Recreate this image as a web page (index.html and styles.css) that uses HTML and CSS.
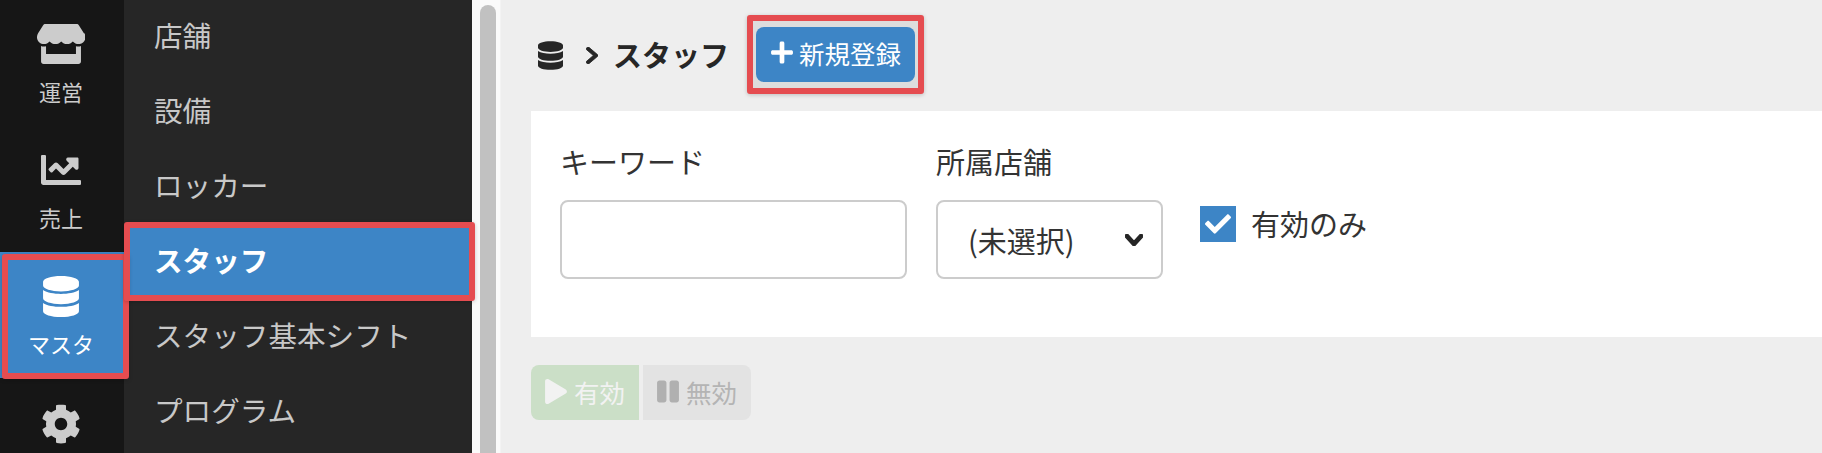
FILE: index.html
```html
<!DOCTYPE html>
<html lang="ja">
<head>
  <meta charset="UTF-8" />
  <title>スタッフ</title>
  <link rel="stylesheet" href="styles.css">
</head>
<body>
  <div class="layout">
    <!-- メインメニュー -->
    <nav class="rail">
      <div class="rail-item">
        <span class="rail-icon"><svg width="48" height="40" viewBox="0 0 616 512"><path d="M602 118.6L537.1 15C531.3 5.7 521 0 510 0H106C95 0 84.7 5.7 78.9 15L14 118.6c-33.9 54.1-3.9 129.3 59.4 137.9 4.6.6 9.1.9 13.6.9 29.8 0 56.3-13.1 74.6-33.4 18.3 20.3 44.8 33.4 74.6 33.4 29.9 0 56.4-13.1 74.6-33.4 18.3 20.3 44.8 33.4 74.6 33.4 29.9 0 56.4-13.1 74.6-33.4 18.3 20.3 44.8 33.4 74.6 33.4 4.6 0 9-.3 13.6-.9 63.5-8.6 93.6-83.8 59.7-137.9zM529.5 288c-10 0-19.9-1.5-29.5-3.8V384H116v-99.8c-9.6 2.2-19.5 3.8-29.5 3.8-6 0-12.1-.4-18-1.2-5.6-.8-11.1-2.1-16.4-3.6V480c0 17.7 14.3 32 32 32h448c17.7 0 32-14.3 32-32V283.2c-5.4 1.6-10.8 2.9-16.4 3.6-6.1.8-12.1 1.2-18.1 1.2z"/></svg></span>
        <span class="rail-label">運営</span>
      </div>
      <div class="rail-item">
        <span class="rail-icon"><svg width="40" height="40" viewBox="0 0 512 512"><path d="M496 384H64V80c0-8.84-7.16-16-16-16H16C7.16 64 0 71.16 0 80v336c0 17.67 14.33 32 32 32h464c8.84 0 16-7.16 16-16v-32c0-8.84-7.16-16-16-16zM464 96H345.94c-21.38 0-32.09 25.85-16.97 40.97l32.4 32.4L288 242.75l-73.37-73.37c-12.5-12.5-32.76-12.5-45.25 0l-68.69 68.69c-6.25 6.25-6.25 16.38 0 22.63l22.62 22.62c6.25 6.25 16.38 6.25 22.63 0L192 237.25l73.37 73.37c12.5 12.5 32.76 12.5 45.25 0l96-96 32.4 32.4c15.12 15.12 40.97 4.41 40.97-16.97V112c.01-8.84-7.15-16-15.99-16z"/></svg></span>
        <span class="rail-label">売上</span>
      </div>
      <div class="rail-item active">
        <span class="rail-icon"><svg width="36" height="41" viewBox="0 0 448 512"><path d="M448 73.143v45.714C448 159.143 347.667 192 224 192S0 159.143 0 118.857V73.143C0 32.857 100.333 0 224 0s224 32.857 224 73.143zM448 176v102.857C448 319.143 347.667 352 224 352S0 319.143 0 278.857V176c48.125 33.143 136.208 48.572 224 48.572S399.874 209.143 448 176zm0 160v102.857C448 479.143 347.667 512 224 512S0 479.143 0 438.857V336c48.125 33.143 136.208 48.572 224 48.572S399.874 369.143 448 336z"/></svg></span>
        <span class="rail-label">マスタ</span>
        <span class="mark rail-mark"></span>
      </div>
      <div class="rail-item rail-gear">
        <span class="rail-icon"><svg width="40" height="40" viewBox="0 0 512 512"><path d="M487.4 315.7l-42.6-24.6c4.3-23.2 4.3-47 0-70.2l42.6-24.6c4.9-2.8 7.1-8.6 5.5-14-11.1-35.6-30-67.8-54.7-94.6-3.8-4.1-10-5.1-14.8-2.3L380.8 110c-17.9-15.4-38.5-27.3-60.8-35.1V25.8c0-5.6-3.9-10.5-9.4-11.7-36.7-8.2-74.3-7.8-109.2 0-5.5 1.2-9.4 6.1-9.4 11.7V75c-22.2 7.9-42.8 19.8-60.8 35.1L88.7 85.5c-4.9-2.8-11-1.9-14.8 2.3-24.7 26.7-43.6 58.9-54.7 94.6-1.7 5.4.6 11.2 5.5 14L67.3 221c-4.3 23.2-4.3 47 0 70.2l-42.6 24.6c-4.9 2.8-7.1 8.6-5.5 14 11.1 35.6 30 67.8 54.7 94.6 3.8 4.1 10 5.1 14.8 2.3l42.6-24.6c17.9 15.4 38.5 27.3 60.8 35.1v49.2c0 5.6 3.9 10.5 9.4 11.7 36.7 8.2 74.3 7.8 109.2 0 5.5-1.2 9.4-6.1 9.4-11.7v-49.2c22.2-7.9 42.8-19.8 60.8-35.1l42.6 24.6c4.9 2.8 11 1.9 14.8-2.3 24.7-26.7 43.6-58.9 54.7-94.6 1.5-5.5-.7-11.3-5.6-14.1zM256 336c-44.1 0-80-35.9-80-80s35.9-80 80-80 80 35.9 80 80-35.9 80-80 80z"/></svg></span>
      </div>
    </nav>

    <!-- サブメニュー -->
    <nav class="submenu">
      <div class="sub-item">店舗</div>
      <div class="sub-item">設備</div>
      <div class="sub-item">ロッカー</div>
      <div class="sub-item active">スタッフ<span class="mark sub-mark"></span></div>
      <div class="sub-item">スタッフ基本シフト</div>
      <div class="sub-item">プログラム</div>
    </nav>

    <div class="scrollbar"><div class="scroll-thumb"></div></div>

    <main class="main">
      <div class="page-head">
        <svg class="head-db" width="25" height="29" viewBox="0 0 448 512"><path d="M448 73.143v45.714C448 159.143 347.667 192 224 192S0 159.143 0 118.857V73.143C0 32.857 100.333 0 224 0s224 32.857 224 73.143zM448 176v102.857C448 319.143 347.667 352 224 352S0 319.143 0 278.857V176c48.125 33.143 136.208 48.572 224 48.572S399.874 209.143 448 176zm0 160v102.857C448 479.143 347.667 512 224 512S0 479.143 0 438.857V336c48.125 33.143 136.208 48.572 224 48.572S399.874 369.143 448 336z"/></svg>
        <svg class="head-chevron" width="12" height="17" viewBox="27 37 265 438" preserveAspectRatio="none"><path d="M285.476 272.971L91.132 467.314c-9.373 9.373-24.569 9.373-33.941 0l-22.667-22.667c-9.357-9.357-9.375-24.522-.04-33.901L188.505 256 34.484 101.255c-9.335-9.379-9.317-24.544.04-33.901l22.667-22.667c9.373-9.373 24.569-9.373 33.941 0L285.475 239.03c9.373 9.372 9.373 24.568.001 33.941z"/></svg>
        <span class="head-title">スタッフ</span>
        <div class="new-wrap">
          <div class="btn-new">
            <svg width="22" height="25" viewBox="0 0 448 512"><path d="M416 208H272V64c0-17.67-14.33-32-32-32h-32c-17.67 0-32 14.33-32 32v144H32c-17.67 0-32 14.33-32 32v32c0 17.67 14.33 32 32 32h144v144c0 17.67 14.33 32 32 32h32c17.67 0 32-14.33 32-32V304h144c17.67 0 32-14.33 32-32v-32c0-17.67-14.33-32-32-32z"/></svg>
            <span>新規登録</span>
          </div>
        </div>
      </div>

      <div class="card">
        <div class="field">
          <label class="field-label">キーワード</label>
          <input class="text-input" type="text" />
        </div>
        <div class="field">
          <label class="field-label">所属店舗</label>
          <div class="select-box">
            <span>(未選択)</span>
            <svg width="18" height="12" viewBox="5 124 438 264" preserveAspectRatio="none"><path d="M207.029 381.476L12.686 187.132c-9.373-9.373-9.373-24.569 0-33.941l22.667-22.667c9.357-9.357 24.522-9.375 33.901-.04L224 284.505l154.745-154.021c9.379-9.335 24.544-9.317 33.901.04l22.667 22.667c9.373 9.373 9.373 24.569 0 33.941L240.971 381.476c-9.373 9.372-24.569 9.372-33.942 0z"/></svg>
          </div>
        </div>
        <div class="check-row">
          <span class="check-box"><svg width="26" height="26" viewBox="0 0 512 512"><path d="M173.898 439.404l-166.4-166.4c-9.997-9.997-9.997-26.206 0-36.204l36.203-36.204c9.997-9.998 26.206-9.998 36.204 0L192 312.69 432.095 72.596c9.997-9.997 26.206-9.997 36.204 0l36.203 36.204c9.997 9.997 9.997 26.206 0 36.204l-294.4 294.401c-9.998 9.997-26.207 9.997-36.204-.001z"/></svg></span>
          <span class="check-text">有効のみ</span>
        </div>
      </div>

      <div class="actions">
        <div class="btn-act btn-on">
          <svg width="22" height="25" viewBox="0 0 448 512"><path d="M424.4 214.7L72.4 6.6C43.8-10.3 0 6.1 0 47.9V464c0 37.5 40.7 60.1 72.4 41.3l352-208c31.4-18.5 31.5-64.1 0-82.6z"/></svg>
          <span>有効</span>
        </div>
        <div class="btn-act btn-off">
          <svg width="22" height="25" viewBox="0 0 448 512"><path d="M144 479H48c-26.5 0-48-21.5-48-48V79c0-26.5 21.5-48 48-48h96c26.5 0 48 21.5 48 48v352c0 26.5-21.5 48-48 48zm304-48V79c0-26.5-21.5-48-48-48h-96c-26.5 0-48 21.5-48 48v352c0 26.5 21.5 48 48 48h96c26.5 0 48-21.5 48-48z"/></svg>
          <span>無効</span>
        </div>
      </div>
    </main>
  </div>
</body>
</html>
```

FILE: styles.css
```css
* { box-sizing: border-box; }
html, body {
  margin: 0;
  padding: 0;
  height: 100%;
  overflow: hidden;
}
body {
  font-family: "Noto Sans CJK JP", "Noto Sans", sans-serif;
  color: #333;
  background: #eee;
}
.layout {
  display: flex;
  height: 453px;
  overflow: hidden;
}

/* 赤枠 (注釈) */
.mark {
  position: absolute;
  border: 6px solid #e54c50;
  border-radius: 3px;
  box-shadow: 0 1px 4px rgba(0, 0, 0, 0.2);
  z-index: 5;
}

.rail {
  width: 124px;
  flex-shrink: 0;
  background: #161616;
}
.rail-item {
  position: relative;
  height: 126px;
  padding: 23px 2px 0 0;
  display: flex;
  flex-direction: column;
  align-items: center;
  color: #ccc;
}
.rail-item.active {
  background: #3d85c6;
  color: #fff;
}
.rail-gear {
  height: 75px;
  padding-top: 25px;
}
.rail-icon {
  display: flex;
  align-items: center;
  justify-content: center;
  height: 42px;
}
.rail-icon svg { fill: currentColor; }
.rail-label {
  margin-top: 11px;
  font-size: 22px;
  line-height: 30px;
}
.rail-mark {
  top: 2px;
  left: 2px;
  right: -5px;
  bottom: -1px;
}

.submenu {
  width: 348px;
  flex-shrink: 0;
  background: #262626;
}
.sub-item {
  position: relative;
  height: 75px;
  padding: 0 0 7px 30px;
  display: flex;
  align-items: center;
  font-size: 28.6px;
  color: #c8c8c8;
}
.sub-item.active {
  background: #3d85c6;
  color: #fff;
  font-weight: bold;
}
.sub-mark {
  top: -3px;
  left: 0;
  right: -3px;
  bottom: -1px;
}

.scrollbar {
  width: 28px;
  flex-shrink: 0;
  padding: 5px 4px 0 8px;
  background: #fafafa;
}
.scroll-thumb {
  height: 100%;
  border-radius: 8px 8px 0 0;
  background: #c1c1c1;
}

.main {
  flex: 1;
  min-width: 0;
  border-left: 1px solid #f3f3f3;
  background: #eee;
}
.page-head {
  display: flex;
  align-items: center;
  height: 111px;
  padding-left: 37px;
}
.head-db { fill: #262626; }
.head-chevron {
  fill: #262626;
  stroke: #262626;
  stroke-width: 20;
  margin-left: 23px;
}
.head-title {
  margin-left: 15px;
  padding-bottom: 4px;
  font-size: 29px;
  font-weight: bold;
  color: #262626;
}
.new-wrap {
  position: relative;
  margin-left: 18px;
  margin-top: -3px;
  padding: 6px 3px;
  border: 6px solid #e54c50;
  border-radius: 3px;
  background: #ddd;
  box-shadow: 0 1px 4px rgba(0, 0, 0, 0.2);
}
.btn-new {
  display: flex;
  align-items: center;
  gap: 6px;
  height: 55px;
  width: 159px;
  padding: 0 0 3px 15px;
  border-radius: 8px;
  background: #3d85c6;
  color: #fff;
  font-size: 25.5px;
}
.btn-new svg { fill: #fff; }

.card {
  display: flex;
  gap: 29px;
  height: 226px;
  margin-left: 30px;
  padding: 29px 29px 0;
  background: #fff;
}
.field {
  display: flex;
  flex-direction: column;
}
.field-label {
  font-size: 29px;
  line-height: 42px;
  margin-bottom: 18px;
}
.text-input {
  width: 347px;
  height: 79px;
  border: 2px solid #ccc;
  border-radius: 8px;
  background: #fff;
}
.select-box {
  display: flex;
  align-items: center;
  justify-content: space-between;
  width: 227px;
  height: 79px;
  padding: 0 18px 0 30px;
  border: 2px solid #ccc;
  border-radius: 8px;
  font-size: 29px;
}
.select-box svg {
  fill: #262626;
  stroke: #262626;
  stroke-width: 30;
}
.check-row {
  display: flex;
  align-items: center;
  gap: 15px;
  height: 36px;
  margin-top: 66px;
  margin-left: 8px;
  font-size: 29px;
}
.check-text { padding-bottom: 2px; }
.check-box {
  display: flex;
  align-items: center;
  justify-content: center;
  width: 36px;
  height: 36px;
  background: #3d85c6;
}
.check-box svg { fill: #fff; }

.actions {
  display: flex;
  gap: 4px;
  margin: 28px 0 0 30px;
}
.btn-act {
  display: flex;
  align-items: center;
  gap: 7px;
  width: 108px;
  height: 55px;
  padding: 0 0 2px 14px;
  font-size: 25.5px;
}
.btn-on {
  border-radius: 8px 0 0 8px;
  background: #cbdfc7;
  color: #f2f2f2;
}
.btn-on svg { fill: #f2f2f2; }
.btn-off {
  border-radius: 0 8px 8px 0;
  background: #e3e3e3;
  color: #b4b4b4;
}
.btn-off svg { fill: #b0b0b0; }
```
